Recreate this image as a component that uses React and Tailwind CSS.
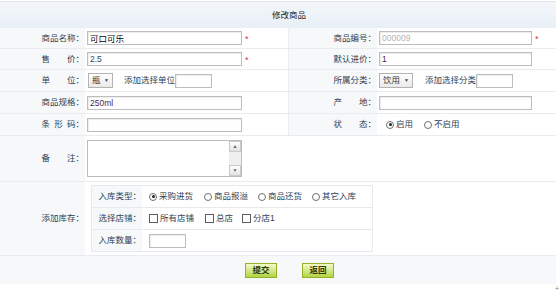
import React from 'react';

const Label = ({ children, className = '' }) => (
  <div className={`flex items-center justify-end bg-[#f7f8f9] pr-[1px] text-[#2f3f55] ${className}`}>
    {children}
  </div>
);

const Box = ({ value = '', className = '', textClass = 'text-[#333]' }) => (
  <input
    readOnly
    value={value}
    className={`h-[14px] border border-[#bdbdbd] bg-white px-[2px] text-[8.5px] leading-none shadow-[inset_1px_1px_1px_rgba(0,0,0,0.08)] outline-none ${textClass} ${className}`}
  />
);

const Star = () => <span className="ml-[3px] mt-[3px] text-[9px] leading-none text-[#e0303a]">*</span>;

const Radio = ({ checked }) => (
  <span className="mr-[2px] flex h-[8px] w-[8px] items-center justify-center rounded-full border border-[#6f6f6f] bg-white">
    {checked && <span className="h-[3px] w-[3px] rounded-full bg-[#222]" />}
  </span>
);

const Check = () => <span className="mr-[2px] inline-block h-[9px] w-[9px] border border-[#5d5d5d] bg-white" />;

const Select = ({ text, w }) => (
  <div className={`flex h-[15px] items-center justify-between border border-[#b3b3b3] bg-linear-to-b from-white to-[#e9e9e9] px-[3px] text-[#333] ${w}`}>
    <span>{text}</span>
    <span className="text-[5px] text-[#444]">▼</span>
  </div>
);

const Row = ({ children, h }) => (
  <div className={`grid grid-cols-[85px_203px_89px_179px] border-b border-[#e8ecf0] ${h}`}>{children}</div>
);

export default function App() {
  return (
    <div className="h-[292px] w-[560px] bg-white font-['Liberation_Sans','Noto_Sans_CJK_SC',sans-serif] text-[8.5px] leading-none text-[#2f3f55]">
      <div className="h-[1px]" />
      <div className="w-[556px] border-t border-[#dfe5ec]">
        <div className="flex h-[26px] items-center bg-linear-to-b from-[#f3f7fb] to-[#e8eff6] pl-[272px] text-[#222]">
          修改商品
        </div>

        <Row h="h-[21px]">
          <Label>商品名称：</Label>
          <div className="flex items-center pl-[2px]">
            <Box value="可口可乐" className="w-[155px]" textClass="text-black" />
            <Star />
          </div>
          <Label className="border-l border-[#eceff2]">商品编号：</Label>
          <div className="flex items-center pl-[2px]">
            <Box value="000009" className="w-[153px]" textClass="text-[#b5b5b5]" />
            <Star />
          </div>
        </Row>

        <Row h="h-[21px]">
          <Label>售　　价：</Label>
          <div className="flex items-center pl-[2px]">
            <Box value="2.5" className="w-[155px]" textClass="text-[#2b4566]" />
            <Star />
          </div>
          <Label className="border-l border-[#eceff2]">默认进价：</Label>
          <div className="flex items-center pl-[2px]">
            <Box value="1" className="w-[153px]" textClass="text-[#4a2a5c]" />
          </div>
        </Row>

        <Row h="h-[22px]">
          <Label>单　　位：</Label>
          <div className="flex items-center pl-[3px]">
            <Select text="瓶" w="w-[25px]" />
            <span className="ml-[11px]">添加选择单位</span>
            <Box className="w-[37px]" />
          </div>
          <Label className="border-l border-[#eceff2]">所属分类：</Label>
          <div className="flex items-center pl-[2px]">
            <Select text="饮用" w="w-[34px]" />
            <span className="ml-[12px]">添加选择分类</span>
            <Box className="w-[37px]" />
          </div>
        </Row>

        <Row h="h-[22px]">
          <Label>商品规格：</Label>
          <div className="flex items-center pl-[2px]">
            <Box value="250ml" className="w-[155px]" textClass="text-[#4a2a5c]" />
          </div>
          <Label className="border-l border-[#eceff2]">产　　地：</Label>
          <div className="flex items-center pl-[2px]">
            <Box className="w-[153px]" />
          </div>
        </Row>

        <Row h="h-[22px]">
          <Label>条&ensp;形&ensp;码：</Label>
          <div className="flex items-center pl-[2px]">
            <Box className="w-[155px]" />
          </div>
          <Label className="border-l border-[#eceff2]">状　　态：</Label>
          <div className="flex items-center pl-[9px]">
            <Radio checked />
            <span>启用</span>
            <span className="ml-[11px]" />
            <Radio />
            <span>不启用</span>
          </div>
        </Row>

        <div className="grid h-[46px] grid-cols-[85px_1fr] border-b border-[#e8ecf0]">
          <Label>备　　注：</Label>
          <div className="flex items-center pl-[2px]">
            <div className="flex h-[37px] w-[155px] border border-[#bdbdbd] bg-white">
              <div className="flex-1" />
              <div className="flex w-[12px] flex-col justify-between bg-[#efefef]">
                <div className="flex h-[11px] items-center justify-center border border-[#c9c9c9] bg-linear-to-b from-white to-[#e3e3e3] text-[5px] text-[#666]">▲</div>
                <div className="flex h-[11px] items-center justify-center border border-[#c9c9c9] bg-linear-to-b from-white to-[#e3e3e3] text-[5px] text-[#666]">▼</div>
              </div>
            </div>
          </div>
        </div>

        <div className="grid h-[74px] grid-cols-[85px_1fr] border-b border-[#e8ecf0]">
          <Label>添加库存：</Label>
          <div className="pl-[6px] pt-[3px]">
            <div className="w-[282px] border border-[#e6e9ed]">
              <div className="grid h-[22px] grid-cols-[50px_1fr] border-b border-[#e6e9ed]">
                <Label>入库类型：</Label>
                <div className="flex items-center pl-[7px]">
                  <Radio checked />
                  <span>采购进货</span>
                  <span className="ml-[11px]" />
                  <Radio />
                  <span>商品报溢</span>
                  <span className="ml-[10px]" />
                  <Radio />
                  <span>商品还货</span>
                  <span className="ml-[10px]" />
                  <Radio />
                  <span>其它入库</span>
                </div>
              </div>
              <div className="grid h-[22px] grid-cols-[50px_1fr] border-b border-[#e6e9ed]">
                <Label>选择店铺：</Label>
                <div className="flex items-center pl-[7px]">
                  <Check />
                  <span>所有店铺</span>
                  <span className="ml-[11px]" />
                  <Check />
                  <span>总店</span>
                  <span className="ml-[9px]" />
                  <Check />
                  <span>分店1</span>
                </div>
              </div>
              <div className="grid h-[21px] grid-cols-[50px_1fr]">
                <Label>入库数量：</Label>
                <div className="flex items-center pl-[7px]">
                  <Box className="w-[37px]" />
                </div>
              </div>
            </div>
          </div>
        </div>

        <div className="flex h-[28px] items-center bg-[#f7f8fa] pl-[245px]">
          <button className="h-[15px] w-[32px] border border-[#93b22c] bg-linear-to-b from-[#f3fbc6] to-[#b4d43a] text-[8.5px] font-bold text-[#2d3a12]">
            提交
          </button>
          <button className="ml-[25px] h-[15px] w-[32px] border border-[#93b22c] bg-linear-to-b from-[#f3fbc6] to-[#b4d43a] text-[8.5px] font-bold text-[#2d3a12]">
            返回
          </button>
        </div>
      </div>
      <div className="flex justify-end pr-[1px] pt-[1px] text-[7px] leading-none text-[#888]">+</div>
    </div>
  );
}
